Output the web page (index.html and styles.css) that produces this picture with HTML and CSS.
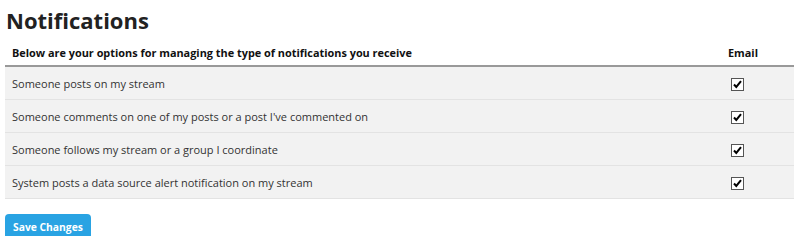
FILE: index.html
```html
<!DOCTYPE html>
<html>
<head>
    <meta charset="utf-8">
    <title>Notifications</title>
    <link rel="stylesheet" href="styles.css">
</head>
<body>
<h1 class="title">Notifications</h1>
<table class="prefs">
    <thead>
    <tr>
        <th class="label">Below are your options for managing the type of notifications you receive</th>
        <th class="email">Email</th>
    </tr>
    </thead>
    <tbody>
    <tr>
        <td class="label">Someone posts on my stream</td>
        <td class="email"><span class="check"><svg viewBox="0 0 13 13" width="13" height="13"><rect x="0.5" y="0.5" width="12" height="12" fill="#fff" stroke="#555"/><path d="M3 6.5 L5.3 9 L10 3.2" fill="none" stroke="#000" stroke-width="2"/></svg></span></td>
    </tr>
    <tr>
        <td class="label">Someone comments on one of my posts or a post I've commented on</td>
        <td class="email"><span class="check"><svg viewBox="0 0 13 13" width="13" height="13"><rect x="0.5" y="0.5" width="12" height="12" fill="#fff" stroke="#555"/><path d="M3 6.5 L5.3 9 L10 3.2" fill="none" stroke="#000" stroke-width="2"/></svg></span></td>
    </tr>
    <tr>
        <td class="label">Someone follows my stream or a group I coordinate</td>
        <td class="email"><span class="check"><svg viewBox="0 0 13 13" width="13" height="13"><rect x="0.5" y="0.5" width="12" height="12" fill="#fff" stroke="#555"/><path d="M3 6.5 L5.3 9 L10 3.2" fill="none" stroke="#000" stroke-width="2"/></svg></span></td>
    </tr>
    <tr>
        <td class="label">System posts a data source alert notification on my stream</td>
        <td class="email"><span class="check"><svg viewBox="0 0 13 13" width="13" height="13"><rect x="0.5" y="0.5" width="12" height="12" fill="#fff" stroke="#555"/><path d="M3 6.5 L5.3 9 L10 3.2" fill="none" stroke="#000" stroke-width="2"/></svg></span></td>
    </tr>
    </tbody>
</table>
<button class="save" type="button">Save Changes</button>
</body>
</html>
```
FILE: styles.css
```css
body {
    margin: 0 6px 0 5px;
    font-family: "Open Sans", sans-serif;
    color: #333;
    background: #fff;
}

.title {
    margin: 4px 0 0 1px;
    font-size: 22px;
    line-height: 32px;
    font-weight: 700;
    color: #222;
}

.prefs {
    width: 100%;
    border-collapse: collapse;
    margin-top: 3px;
}

.prefs th {
    font-size: 10.9px;
    font-weight: 700;
    color: #111;
    text-align: left;
    height: 26px;
    padding: 0 7px;
    border-bottom: 2px solid #999;
}

.prefs td {
    font-size: 11px;
    height: 32px;
    padding: 0 7px;
    background: #f2f2f2;
    border-bottom: 1px solid #e3e3e3;
}

.prefs .email {
    width: 30px;
    padding-right: 36px;
    text-align: left;
}

.check {
    display: inline-block;
    width: 13px;
    height: 13px;
    margin-left: 3px;
    vertical-align: middle;
}

.check svg {
    display: block;
}

.save {
    margin-top: 15px;
    padding: 0 8px;
    height: 26px;
    border: 0;
    border-radius: 4px;
    background: #29a3e3;
    color: #fff;
    font-family: "Open Sans", sans-serif;
    font-size: 10.3px;
    font-weight: 700;
}
```
